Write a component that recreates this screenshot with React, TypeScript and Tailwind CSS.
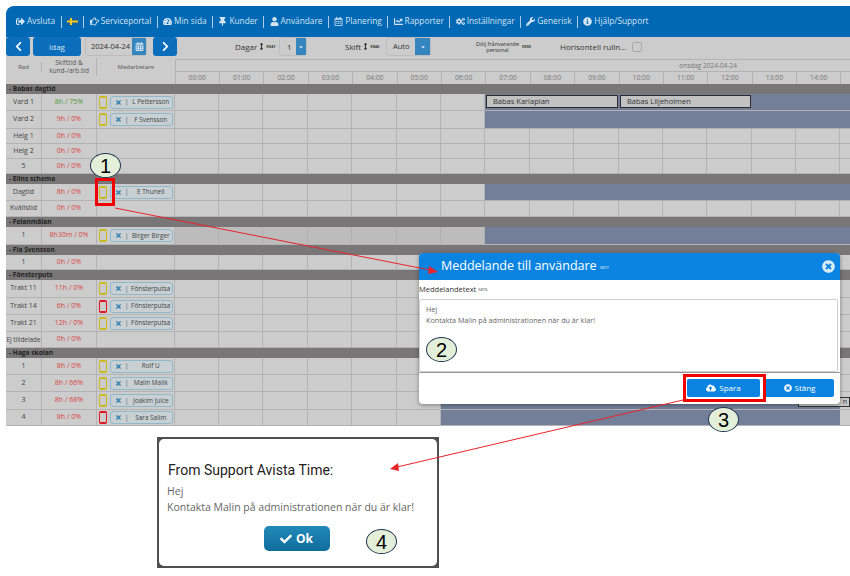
import React from 'react';
import {
  FaSignOutAlt, FaRegHandPointRight, FaTachometerAlt, FaThumbtack, FaUser, FaRegCalendarAlt,
  FaChartLine, FaCogs, FaWrench, FaInfoCircle, FaChevronLeft, FaChevronRight, FaCaretDown,
  FaTimes, FaCloudUploadAlt, FaTimesCircle, FaCheck, FaCalendarAlt, FaArrowsAltV,
} from 'react-icons/fa';

type Row = {
  rad: string;
  tid: string;
  good?: boolean;
  phone?: 'yellow' | 'red';
  name?: string;
  h: string;
  barFrom?: number;
  barTo?: number;
  dimTo?: number;
};
type Group = { title: string; rows: Row[] };

const groups: Group[] = [
  {
    title: 'Babas dagtid',
    rows: [
      { rad: 'Vard 1', tid: '8h / 75%', good: true, phone: 'yellow', name: 'L Pettersson', h: 'h-[17px]', barFrom: 7 },
      { rad: 'Vard 2', tid: '9h / 0%', phone: 'yellow', name: 'F Svensson', h: 'h-[18px]', barFrom: 7 },
      { rad: 'Helg 1', tid: '0h / 0%', h: 'h-[15px]' },
      { rad: 'Helg 2', tid: '0h / 0%', h: 'h-[15px]' },
      { rad: '5', tid: '0h / 0%', h: 'h-[15px]' },
    ],
  },
  {
    title: 'Elins schema',
    rows: [
      { rad: 'Dagtid', tid: '8h / 0%', phone: 'yellow', name: 'E Thunell', h: 'h-[17px]', barFrom: 7 },
      { rad: 'Kvällstid', tid: '0h / 0%', h: 'h-[16px]' },
    ],
  },
  {
    title: 'Felanmälan',
    rows: [{ rad: '1', tid: '8h30m / 0%', phone: 'yellow', name: 'Birger Birger', h: 'h-[18px]', barFrom: 7, dimTo: 7 }],
  },
  { title: 'Fia Svensson', rows: [{ rad: '1', tid: '0h / 0%', h: 'h-[15px]' }] },
  {
    title: 'Fönsterputs',
    rows: [
      { rad: 'Trakt 11', tid: '11h / 0%', phone: 'yellow', name: 'Fönsterputsa', h: 'h-[18px]' },
      { rad: 'Trakt 14', tid: '6h / 0%', phone: 'red', name: 'Fönsterputsa', h: 'h-[17px]' },
      { rad: 'Trakt 21', tid: '12h / 0%', phone: 'yellow', name: 'Fönsterputsa', h: 'h-[17px]' },
      { rad: 'Ej tilldelade', tid: '0h / 0%', h: 'h-[16px]' },
    ],
  },
  {
    title: 'Haga skolan',
    rows: [
      { rad: '1', tid: '8h / 0%', phone: 'yellow', name: 'Rolf U', h: 'h-[17px]', barFrom: 6, barTo: 15 },
      { rad: '2', tid: '8h / 66%', phone: 'yellow', name: 'Malin Malik', h: 'h-[17px]', barFrom: 6, barTo: 15 },
      { rad: '3', tid: '8h / 68%', phone: 'yellow', name: 'Joakim Juice', h: 'h-[18px]', barFrom: 6, barTo: 15 },
      { rad: '4', tid: '8h / 0%', phone: 'red', name: 'Sara Salim', h: 'h-[16px]', barFrom: 6, barTo: 15 },
    ],
  },
];

const hours = Array.from({ length: 16 }, (_, i) => i);

const navItems = [
  { label: 'Avsluta', icon: <FaSignOutAlt /> },
  { label: '', icon: <SwedishFlag /> },
  { label: 'Serviceportal', icon: <FaRegHandPointRight /> },
  { label: 'Min sida', icon: <FaTachometerAlt /> },
  { label: 'Kunder', icon: <FaThumbtack /> },
  { label: 'Användare', icon: <FaUser /> },
  { label: 'Planering', icon: <FaRegCalendarAlt /> },
  { label: 'Rapporter', icon: <FaChartLine /> },
  { label: 'Inställningar', icon: <FaCogs /> },
  { label: 'Generisk', icon: <FaWrench /> },
  { label: 'Hjälp/Support', icon: <FaInfoCircle /> },
];

function SwedishFlag() {
  return (
    <svg width="11" height="7" viewBox="0 0 11 7">
      <rect width="11" height="7" rx="1" fill="#1c5f9e" />
      <rect x="3" width="2" height="7" fill="#f2c81e" />
      <rect y="2.5" width="11" height="2" fill="#f2c81e" />
    </svg>
  );
}

function Phone({ color }: { color: 'yellow' | 'red' }) {
  return (
    <div
      className={`h-[13px] w-[8px] shrink-0 rounded-[2px] border-x border-y-2 ${
        color === 'red' ? 'border-[#e0141c]' : 'border-[#c9b81e]'
      }`}
    />
  );
}

function Badge({ n, className }: { n: string; className: string }) {
  return (
    <div
      className={`absolute z-30 flex h-[25px] w-[31px] items-center justify-center rounded-[50%] border border-[#1f3350] bg-[#e4efd9] font-['Liberation_Sans',sans-serif] text-[20px] text-black ${className}`}
    >
      {n}
    </div>
  );
}

function TimelineCell({ hour, row }: { hour: number; row: Row }) {
  const onBar = row.barFrom !== undefined && hour >= row.barFrom && hour < (row.barTo ?? 99);
  const dim = row.dimTo !== undefined && hour < row.dimTo;
  return (
    <div
      className={`h-full w-[44.4px] shrink-0 ${
        onBar ? 'bg-[#737f99]' : dim ? 'border-r border-[#b0b0b0] bg-[#bcbcbc]' : 'border-r border-[#b3b3b3]'
      }`}
    />
  );
}

function ScheduleRow({ row }: { row: Row }) {
  return (
    <div className={`flex border-b border-[#b3b3b3] ${row.h}`}>
      <div
        className={`flex w-[36px] shrink-0 items-center justify-center whitespace-nowrap border-r border-[#b3b3b3] text-[#444] ${
          row.rad === 'Ej tilldelade' ? 'text-[6.4px]' : 'text-[7px]'
        }`}
      >
        {row.rad}
      </div>
      <div
        className={`flex w-[55px] shrink-0 items-center justify-center border-r border-[#b3b3b3] text-[7px] ${
          row.good ? 'text-[#4f9a3a]' : 'text-[#d9443f]'
        }`}
      >
        {row.tid}
      </div>
      <div className="flex w-[77.6px] shrink-0 items-center gap-[3px] border-r border-[#b3b3b3] pl-[2px]">
        {row.phone && <Phone color={row.phone} />}
        {row.name && (
          <div className="flex h-[13px] w-[63px] items-center rounded-[3px] border border-[#8fb8cc] bg-[#c8d0d4] pl-[4px] text-[6.4px] text-[#444]">
            <FaTimes className="shrink-0 text-[7px] text-[#2f7fb0]" />
            <span className="ml-[3px] text-[#555]">|</span>
            <span className="flex-1 whitespace-nowrap pl-[1px] text-center">{row.name}</span>
          </div>
        )}
      </div>
      {hours.map((hour) => (
        <TimelineCell key={hour} hour={hour} row={row} />
      ))}
    </div>
  );
}

function Toolbar() {
  return (
    <div className="flex h-[19px] items-center bg-[#cccccc] text-[#333]">
      <button className="flex h-[19px] w-[24px] items-center justify-center rounded-[3px] bg-[#0a6ebd] text-[11px] text-white">
        <FaChevronLeft />
      </button>
      <button className="ml-[3px] h-[19px] w-[48px] rounded-[3px] bg-[#0a6ebd] text-[8px] text-[#d5e6f3]">Idag</button>
      <div className="ml-[4px] flex h-[19px] w-[62px] items-center rounded-[3px] border border-[#bdbdbd] pl-[5px] text-[7.5px]">
        <span className="w-[41px] overflow-hidden whitespace-nowrap">2024-04-24</span>
        <span className="flex h-full flex-1 items-center justify-center bg-[#3585bf] text-[9px] text-[#cfe2f0]">
          <FaCalendarAlt />
        </span>
      </div>
      <button className="ml-[6px] flex h-[19px] w-[24px] items-center justify-center rounded-[3px] bg-[#0a6ebd] text-[11px] text-white">
        <FaChevronRight />
      </button>
      <div className="ml-[58px] flex w-[44px] items-center whitespace-nowrap text-[8px]">
        Dagar
        <FaArrowsAltV className="ml-[1px] text-[7px]" />
        <span className="ml-[1px] text-[4px] font-bold">5941</span>
      </div>
      <div className="flex h-[19px] w-[28px] items-center rounded-[3px] border border-[#bdbdbd] pl-[7px] text-[8px]">
        <span className="w-[9px]">1</span>
        <span className="flex h-full flex-1 items-center justify-center bg-[#3585bf] text-[6px] text-[#d5e6f3]">
          <FaCaretDown />
        </span>
      </div>
      <div className="ml-[38px] flex w-[41px] items-center whitespace-nowrap text-[8px]">
        Skift
        <FaArrowsAltV className="ml-[1px] text-[7px]" />
        <span className="ml-[1px] text-[4px] font-bold">5940</span>
      </div>
      <div className="flex h-[19px] w-[45px] items-center rounded-[3px] border border-[#bdbdbd] pl-[6px] text-[7.5px]">
        <span className="w-[22px]">Auto</span>
        <span className="flex h-full flex-1 items-center justify-center bg-[#3585bf] text-[6px] text-[#d5e6f3]">
          <FaCaretDown />
        </span>
      </div>
      <div className="ml-[44px] flex w-[60px] items-center">
        <span className="w-[45px] whitespace-nowrap text-center text-[5.5px] leading-[6px]">
          Dölj frånvarande
          <br />
          personal
        </span>
        <span className="ml-[2px] text-[4px] font-bold">5935</span>
      </div>
      <span className="ml-[25px] whitespace-nowrap text-[8px]">Horisontell rulln...</span>
      <span className="ml-[6px] h-[10px] w-[10px] rounded-[2px] border border-[#aaa]" />
    </div>
  );
}

function HeaderRow() {
  return (
    <div className="flex h-[28px] text-[#555]">
      <div className="flex w-[36px] shrink-0 items-center justify-center pb-[6px] text-[6px]">
        <span className="flex h-[10px] w-full items-center justify-center border-r border-[#b3b3b3]">Rad</span>
      </div>
      <div className="flex w-[55px] shrink-0 items-center justify-center pb-[6px]">
        <span className="flex h-[18px] w-full items-center justify-center border-r border-[#b3b3b3] text-center text-[6.5px] leading-[8px]">
          Skifttid &<br />
          kund-/arb.tid
        </span>
      </div>
      <div className="flex w-[77.6px] shrink-0 items-center justify-center pb-[6px] text-[6px]">Medarbetare</div>
      <div className="mt-[3px] flex-1 overflow-hidden border-l border-t border-[#b3b3b3]">
        <div className="flex h-[12px] items-center justify-end border-b border-[#b3b3b3] pr-[113px] text-[6.5px] text-[#777]">
          onsdag 2024-04-24
        </div>
        <div className="flex h-[13px]">
          {hours.map((hour) => (
            <div
              key={hour}
              className="flex w-[44.4px] shrink-0 items-center justify-center border-r border-[#b3b3b3] text-[6.8px] text-[#777]"
            >
              {hour < 15 && `${String(hour).padStart(2, '0')}:00`}
            </div>
          ))}
        </div>
      </div>
    </div>
  );
}

function Schedule() {
  return (
    <div className="h-[389px] overflow-hidden bg-[#cccccc]">
      <Toolbar />
      <HeaderRow />
      {groups.map((group) => (
        <div key={group.title}>
          <div className="flex h-[10px] items-center bg-[#787676] pl-[3px] text-[6.6px] font-bold text-[#222]">
            - {group.title}
          </div>
          {group.rows.map((row, i) => (
            <ScheduleRow key={i} row={row} />
          ))}
        </div>
      ))}
    </div>
  );
}

function ShiftCard({ label, className }: { label: string; className: string }) {
  return (
    <div
      className={`absolute top-[95px] flex h-[13px] items-center border border-[#2c2c30] bg-[#c2c2c2] pl-[6px] text-[7.5px] text-[#333] ${className}`}
    >
      {label}
    </div>
  );
}

function MessageModal() {
  return (
    <div className="absolute left-[419px] top-[253px] z-10 h-[151px] w-[421px] overflow-hidden rounded-[4px] bg-white shadow-[0_1px_4px_rgba(0,0,0,0.4)]">
      <div className="flex h-[27px] items-center bg-[#0a84e0] pl-[22px] pr-[5px] text-white">
        <span className="text-[12.5px]">Meddelande till användare</span>
        <span className="ml-[3px] mt-[2px] text-[4px]">5877</span>
        <FaTimesCircle className="ml-auto text-[13px] text-[#d8ecfa]" />
      </div>
      <div className="flex h-[19px] items-center text-[7.5px] text-[#333]">
        Meddelandetext
        <span className="ml-[2px] text-[4px]">5876</span>
      </div>
      <div className="mr-[2px] h-[73px] rounded-[2px] border border-[#cfcfcf] pl-[6px] pt-[4px] text-[7.2px] leading-[10.5px] text-[#666]">
        Hej
        <br />
        Kontakta Malin på administrationen när du är klar!
      </div>
      <div className="flex h-[32px] items-start justify-end gap-[5px] border-t border-[#999] pr-[6px] pt-[6px]">
        <button className="flex h-[18px] w-[73px] items-center justify-center gap-[3px] rounded-[2px] bg-[#0a84e0] text-[8px] text-white">
          <FaCloudUploadAlt className="text-[10px]" /> Spara
        </button>
        <button className="flex h-[18px] w-[69px] items-center justify-center gap-[3px] rounded-[2px] bg-[#0a84e0] text-[8px] text-white">
          <FaTimesCircle className="text-[8px]" /> Stäng
        </button>
      </div>
    </div>
  );
}

function SupportDialog() {
  return (
    <div className="absolute left-[157px] top-[437px] z-10 h-[131px] w-[282px] bg-[#4f4f4f] p-[2px]">
      <div className="h-full rounded-[5px] bg-white pl-[8px]">
        <div className="ml-[1px] pt-[22px] font-['Roboto',sans-serif] text-[14px] leading-[18px] text-[#222]">
          From Support Avista Time:
        </div>
        <div className="mt-[5px] text-[10.5px] leading-[15.5px] text-[#666]">
          Hej
          <br />
          Kontakta Malin på administrationen när du är klar!
        </div>
        <div className="mt-[11px] flex justify-center pr-[11px]">
          <button className="flex h-[25px] w-[66px] items-center justify-center gap-[4px] rounded-[5px] bg-gradient-to-b from-[#2189b8] to-[#0f6d9c] text-[12px] font-bold text-white">
            <FaCheck className="text-[12px]" /> Ok
          </button>
        </div>
      </div>
    </div>
  );
}

export default function App() {
  return (
    <div className="relative h-[576px] w-[850px] overflow-hidden bg-white font-['Open_Sans',sans-serif]">
      <div className="pl-[6px] pt-[6px]">
        {/* Top menu */}
        <div className="flex h-[31px] items-center rounded-tl-[8px] bg-[#0068b4] pl-[10px] text-[8.3px] text-[#d4e4f1]">
          {navItems.map((item, i) => (
            <React.Fragment key={i}>
              {i > 0 && <span className="mx-[5.4px] h-[12px] w-px bg-[#a9cbe4]" />}
              <span className="flex items-center gap-[2px] whitespace-nowrap">
                <span className="text-[9px]">{item.icon}</span>
                {item.label}
              </span>
            </React.Fragment>
          ))}
        </div>
        <Schedule />
      </div>

      <ShiftCard label="Babas Karlaplan" className="left-[486px] w-[132px]" />
      <ShiftCard label="Babas Liljeholmen" className="left-[620px] w-[131px]" />
      <div className="absolute left-[798px] top-[397px] flex h-[10px] w-[52px] items-center justify-end border border-[#333] bg-[#c8c8c8] pr-[2px] text-[7px] text-[#333]">
        n
      </div>

      <MessageModal />
      <SupportDialog />

      {/* Annotations on top of the screenshot */}
      <div className="absolute left-[95px] top-[178px] z-20 h-[28px] w-[20px] border-[3px] border-[#f00000]" />
      <div className="absolute left-[683px] top-[374px] z-20 h-[28px] w-[83px] border-[3px] border-[#f00000]" />
      <svg className="pointer-events-none absolute left-0 top-0 z-20" width="850" height="576" viewBox="0 0 850 576">
        <line x1="115" y1="208" x2="430" y2="270" stroke="#e8232a" strokeWidth="1" />
        <polygon points="438,272 429,266 428,274" fill="#e8232a" />
        <line x1="683" y1="400" x2="397" y2="467" stroke="#e8232a" strokeWidth="1" />
        <polygon points="390,469 398,463 399,471" fill="#e8232a" />
      </svg>
      <Badge n="1" className="left-[90px] top-[153px]" />
      <Badge n="2" className="left-[426px] top-[337px]" />
      <Badge n="3" className="left-[708px] top-[407px]" />
      <Badge n="4" className="left-[366px] top-[529px]" />
    </div>
  );
}
